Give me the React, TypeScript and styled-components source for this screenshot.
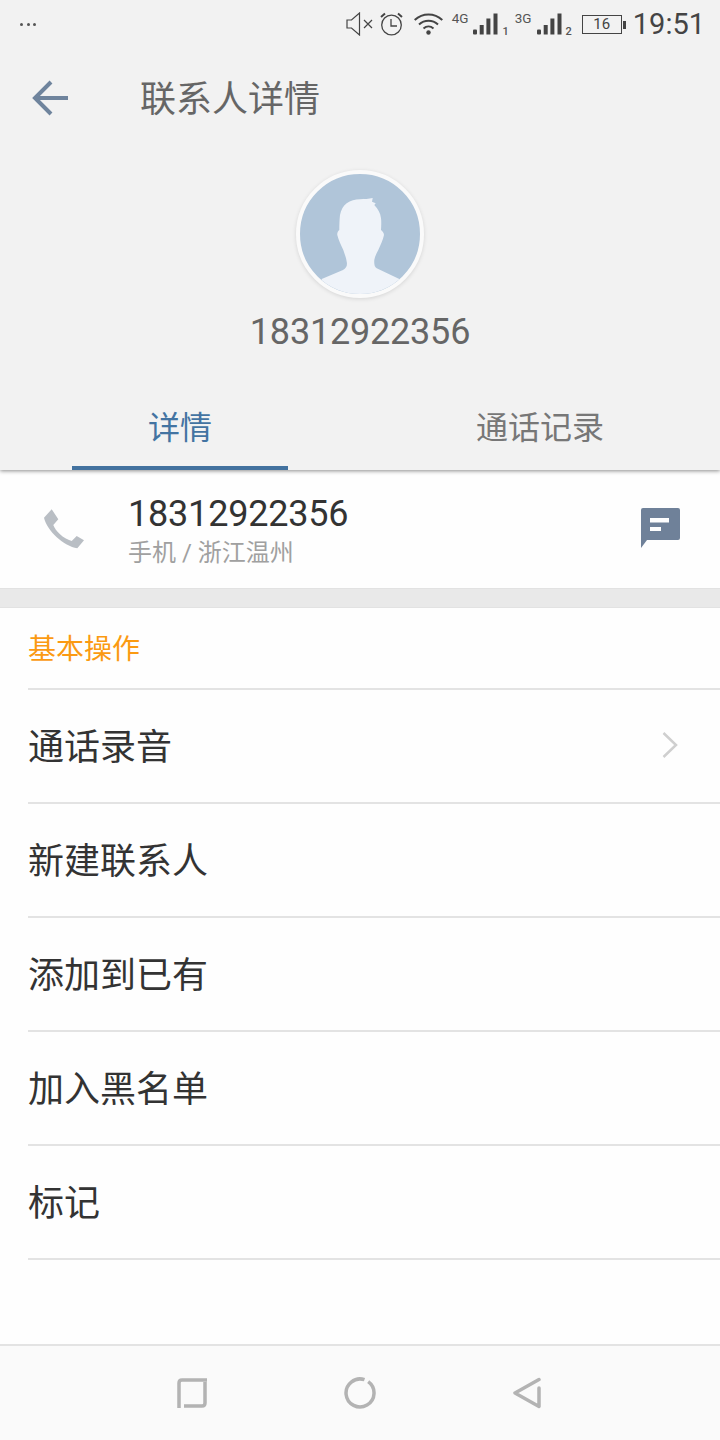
import React from 'react'
import styled, { createGlobalStyle } from 'styled-components'

const GlobalStyle = createGlobalStyle`
    html, body {
        margin: 0;
        padding: 0;
        background: #fefefe;
    }
    body {
        font-family: Roboto, "Noto Sans CJK SC", sans-serif;
    }
`

const Page = styled.div`
    width: 720px;
    height: 1440px;
    display: flex;
    flex-direction: column;
    overflow: hidden;
`

const Header = styled.header`
    height: 470px;
    flex: none;
    display: flex;
    flex-direction: column;
    background: #f2f2f2;
    box-shadow: 0 1px 4px rgba(0, 0, 0, 0.45);
    position: relative;
    z-index: 1;
`

const StatusBar = styled.div`
    height: 48px;
    flex: none;
    display: flex;
    align-items: center;
    padding: 0 15px 0 20px;
    color: #444;
`

const Dots = styled.div`
    display: flex;
    gap: 3.5px;
    margin-right: auto;

    i {
        width: 3px;
        height: 3px;
        border-radius: 50%;
        background: #555;
    }
`

const StatusIcon = styled.svg<{ $gap?: number; $lift?: number }>`
    display: block;
    flex: none;
    margin-left: ${p => p.$gap ?? 0}px;
    margin-top: ${p => p.$lift ?? 0}px;
`

const NetLabel = styled.span<{ $gap: number }>`
    font-size: 13.5px;
    line-height: 13px;
    color: #555;
    align-self: flex-start;
    margin: 12px 0 0 ${p => p.$gap}px;
`

const SimIndex = styled.span`
    font-size: 11px;
    line-height: 11px;
    font-weight: 500;
    color: #555;
    align-self: flex-end;
    margin: 0 0 11px 4px;
`

const Battery = styled.div`
    width: 40px;
    height: 19px;
    box-sizing: border-box;
    margin-left: 10px;
    border: 1px solid #444;
    font-size: 15px;
    line-height: 17px;
    text-align: center;
    color: #444;
    position: relative;

    &::after {
        content: '';
        position: absolute;
        right: -5px;
        top: 5px;
        width: 3px;
        height: 8px;
        background: #444;
    }
`

const Clock = styled.span`
    font-size: 29px;
    line-height: 48px;
    color: #444;
    margin-left: 11px;
`

const Toolbar = styled.div`
    height: 100px;
    flex: none;
    display: flex;
    align-items: center;
`

const BackButton = styled.div`
    width: 140px;
    flex: none;
    padding-left: 32px;
    box-sizing: border-box;
    display: flex;
`

const Title = styled.h1`
    margin: 0;
    padding-top: 3px;
    font-size: 36px;
    font-weight: 400;
    color: #666;
    line-height: 44px;
`

const Profile = styled.div`
    display: flex;
    flex-direction: column;
    align-items: center;
    margin-top: 22px;
`

const Avatar = styled.div`
    width: 128px;
    height: 128px;
    box-sizing: border-box;
    border: 4px solid #fafafa;
    border-radius: 50%;
    background: #b0c5d9;
    overflow: hidden;
    box-shadow: 0 1px 4px rgba(0, 0, 0, 0.12);
`

const ProfileNumber = styled.div`
    font-size: 36px;
    line-height: 42px;
    letter-spacing: -0.2px;
    color: #666;
    margin-top: 13px;
`

const Tabs = styled.div`
    display: flex;
    justify-content: center;
    margin-top: auto;
`

const Tab = styled.div<{ $active?: boolean }>`
    width: 216px;
    margin: 0 72px;
    height: 72px;
    box-sizing: border-box;
    text-align: center;
    font-size: 32px;
    line-height: 60px;
    color: ${p => (p.$active ? '#4374a2' : '#777')};
    border-bottom: 4px solid ${p => (p.$active ? '#43729f' : 'transparent')};
`

const PhoneRow = styled.div`
    height: 118px;
    flex: none;
    display: flex;
    align-items: center;
    padding: 0 40px 0 44px;
    background: #fefefe;
`

const PhoneIcon = styled.svg`
    display: block;
    flex: none;
`

const MessageIcon = styled.svg`
    display: block;
    flex: none;
    margin-top: -2px;
`

const PhoneInfo = styled.div`
    margin-left: 44px;
    flex: 1;
    display: flex;
    flex-direction: column;
    padding-top: 6px;
`

const PhoneNumber = styled.div`
    font-size: 36px;
    line-height: 42px;
    letter-spacing: -0.2px;
    color: #333;
`

const PhoneMeta = styled.div`
    margin-top: 1px;
    font-size: 24px;
    line-height: 35px;
    color: #a0a0a0;
`

const Gap = styled.div`
    height: 18px;
    flex: none;
    background: #e9e9e9;
    border-top: 1px solid #e2e2e2;
    border-bottom: 1px solid #e2e2e2;
`

const SectionTitle = styled.div`
    height: 80px;
    flex: none;
    margin-left: 28px;
    font-size: 28px;
    line-height: 83px;
    color: #fb9a12;
`

const Row = styled.div`
    height: 114px;
    flex: none;
    box-sizing: border-box;
    margin-left: 28px;
    padding-right: 42px;
    display: flex;
    align-items: center;
    justify-content: space-between;
    border-top: 2px solid #e3e3e3;
    font-size: 36px;
    color: #333;
`

const RowLabel = styled.span`
    padding-top: 4px;
    line-height: 44px;
`

const Chevron = styled.svg`
    display: block;
    flex: none;
    margin-top: -2px;
`

const Spacer = styled.div`
    flex: 1;
    background: #fefefe;
`

const LastLine = styled.div`
    height: 2px;
    flex: none;
    margin-left: 28px;
    background: #e3e3e3;
`

const NavBar = styled.nav`
    height: 96px;
    flex: none;
    box-sizing: border-box;
    border-top: 2px solid #e3e3e3;
    background: #fafafa;
    display: flex;
    align-items: center;
    justify-content: center;
    gap: 137px;
    padding-right: 2px;
`

const rows = ['通话录音', '新建联系人', '添加到已有', '加入黑名单', '标记']

const Bars = () => (
    <StatusIcon width="25" height="22" viewBox="0 0 25 22" fill="#444" $gap={5} $lift={-1}>
        <rect x="0" y="16.5" width="4" height="5" rx="1" />
        <rect x="6.7" y="12" width="4" height="9.5" />
        <rect x="13.4" y="5.5" width="4" height="16" />
        <rect x="20.5" y="0.5" width="4" height="21" />
    </StatusIcon>
)

export default function App() {
    return (
        <Page>
            <GlobalStyle />
            <Header>
                <StatusBar>
                    <Dots><i /><i /><i /></Dots>
                    <StatusIcon width="27" height="24" viewBox="0 0 27 24" fill="none" stroke="#444" strokeWidth="1.2">
                        <path d="M1 8v8h4.5l8 7V1l-8 7z" />
                        <path d="M18 8l8 8M26 8l-8 8" />
                    </StatusIcon>
                    <StatusIcon width="23" height="24" viewBox="0 0 23 24" fill="none" stroke="#444" strokeWidth="1.3" $gap={7}>
                        <circle cx="11.5" cy="13" r="9.8" />
                        <path d="M11 7v7h6" />
                        <path d="M1 5l4-3.5M22 5l-4-3.5" strokeWidth="2" />
                    </StatusIcon>
                    <StatusIcon width="29" height="22" viewBox="0 0 29 22" fill="none" stroke="#444" strokeWidth="2" $gap={11}>
                        <path d="M0.7 7c8-7.5 19.600-7.5 27.600 0" />
                        <path d="M5 11.5c5.5-5 13.5-5 19 0" />
                        <path d="M9.5 15.5c3-2.6 7-2.6 10 0" />
                        <circle cx="14.5" cy="19.5" r="2.2" fill="#444" stroke="none" />
                    </StatusIcon>
                    <NetLabel $gap={9}>4G</NetLabel>
                    <Bars />
                    <SimIndex>1</SimIndex>
                    <NetLabel $gap={6}>3G</NetLabel>
                    <Bars />
                    <SimIndex>2</SimIndex>
                    <Battery>16</Battery>
                    <Clock>19:51</Clock>
                </StatusBar>
                <Toolbar>
                    <BackButton>
                        <svg width="36" height="36" viewBox="0 0 36 36" fill="none" stroke="#6f849d" strokeWidth="4">
                            <path d="M36 18H4" />
                            <path d="M19 2L3 18l16 16" />
                        </svg>
                    </BackButton>
                    <Title>联系人详情</Title>
                </Toolbar>
                <Profile>
                    <Avatar>
                        <svg width="120" height="120" viewBox="0 0 120 120">
                            <path
                                fill="#eff3f9"
                                d="M21.7 105L43 96C46.5 94.5 47.500 91 46.7 87.7C46 83 44.5 80 43.3 76C41 71 38.5 66 37.3 61C37 59 38 57 39.3 56C39.3 50 39.5 46 40 41C41 36 43 32 46.7 29.3C50.5 26.5 55 25.5 60 25.3C64 25 69 25 72.7 24L72 27.7L75.7 29.3L74.3 31C78 35 80.5 39 81 44.3C81.5 48 81.2 52 81 56C82.5 57 84 59 84 61C83 66 80.5 71 78.3 76C76.5 79.5 74.8 82.5 74.3 86C74 90 74.5 93 76.7 94.3L99.3 105V120H21.7Z"
                            />
                        </svg>
                    </Avatar>
                    <ProfileNumber>18312922356</ProfileNumber>
                </Profile>
                <Tabs>
                    <Tab $active>详情</Tab>
                    <Tab>通话记录</Tab>
                </Tabs>
            </Header>
            <PhoneRow>
                <PhoneIcon width="40" height="40" viewBox="0 0 40 40" fill="#b9bec4">
                    <path d="M0 8.7L7.7 0.3L14.3 10.3L9.3 16C11.5 22 19 29.5 27.7 32L32.7 27L40 31.3L33.3 39.3C20 37 3 22 0 8.7Z" />
                </PhoneIcon>
                <PhoneInfo>
                    <PhoneNumber>18312922356</PhoneNumber>
                    <PhoneMeta>手机 / 浙江温州</PhoneMeta>
                </PhoneInfo>
                <MessageIcon width="39" height="40" viewBox="0 0 39 40">
                    <path fill="#6f8199" d="M2 0h35a2 2 0 0 1 2 2v28a2 2 0 0 1-2 2H6l-6 8V2a2 2 0 0 1 2-2z" />
                    <path fill="#fefefe" d="M9 10h19v4.5H9zM9 19h11v4H9z" />
                </MessageIcon>
            </PhoneRow>
            <Gap />
            <SectionTitle>基本操作</SectionTitle>
            {rows.map((row, i) => (
                <Row key={row}>
                    <RowLabel>{row}</RowLabel>
                    {i === 0 && (
                        <Chevron width="16" height="26" viewBox="0 0 16 26" fill="none" stroke="#cfcfcf" strokeWidth="2.5">
                            <path d="M1.5 1l12.5 12-12.5 12" />
                        </Chevron>
                    )}
                </Row>
            ))}
            <LastLine />
            <Spacer />
            <NavBar>
                <svg width="30" height="30" viewBox="0 0 30 30" fill="none" stroke="#b3b3b3" strokeWidth="3.5">
                    <path d="M30 2H5Q2 2 2 5v25" />
                    <path d="M28 4v21q0 3-3 3H7" />
                </svg>
                <svg width="32" height="32" viewBox="0 0 32 32" fill="none" stroke="#b3b3b3" strokeWidth="3.5">
                    <path d="M24.2 4.6A14 14 0 1 1 20.5 2.7" />
                </svg>
                <svg width="28" height="32" viewBox="0 0 28 32" fill="none" stroke="#b3b3b3" strokeWidth="3.5" strokeLinecap="round" strokeLinejoin="round">
                    <path d="M26 2.5L2 16l24 13.5V11" />
                </svg>
            </NavBar>
        </Page>
    )
}
